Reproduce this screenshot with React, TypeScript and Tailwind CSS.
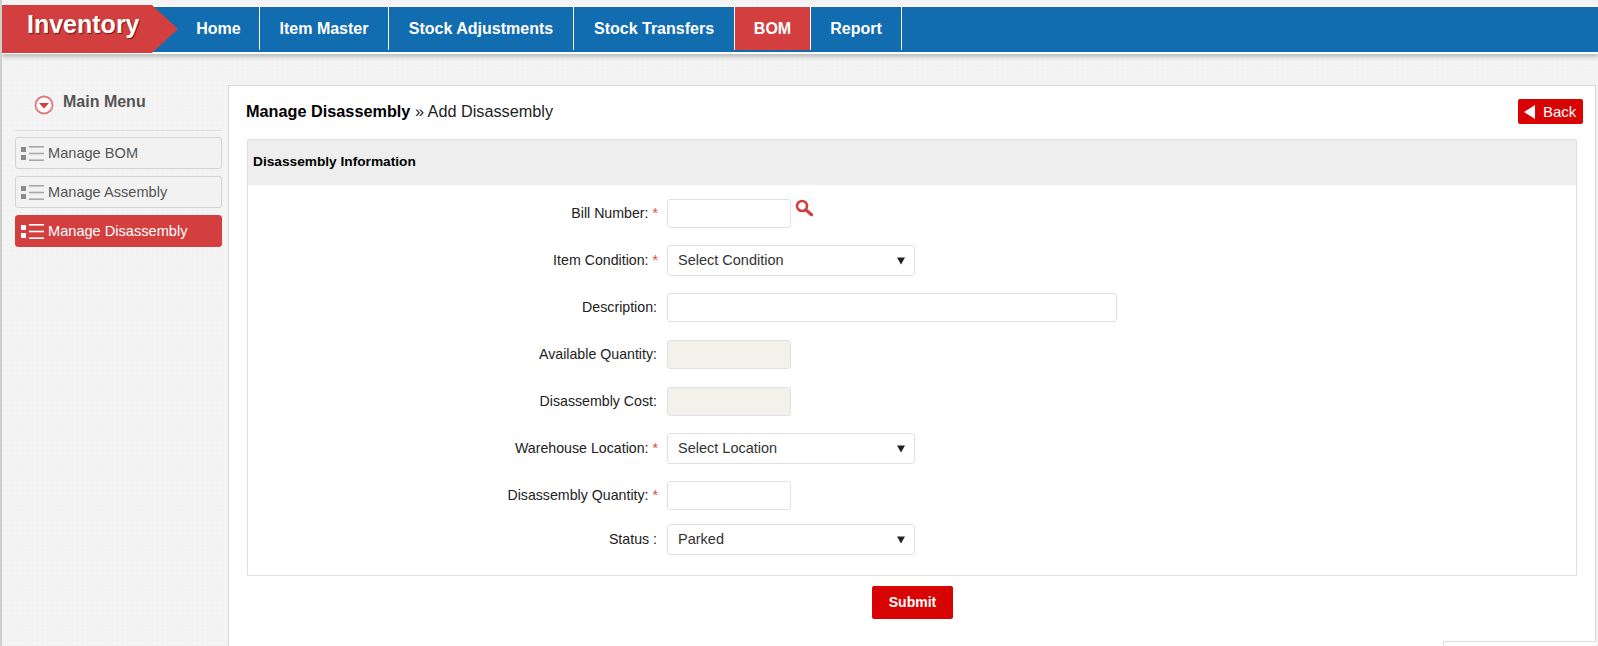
import type { ReactNode } from "react";

const navItems = [
  { label: "Home", width: "w-[82px]" },
  { label: "Item Master", width: "w-[129px]" },
  { label: "Stock Adjustments", width: "w-[185px]" },
  { label: "Stock Transfers", width: "w-[161px]" },
  { label: "BOM", width: "w-[76px]", active: true },
  { label: "Report", width: "w-[91px]" },
];

const menuItems = [
  { label: "Manage BOM" },
  { label: "Manage Assembly" },
  { label: "Manage Disassembly", active: true },
];

function ListIcon({ active }: { active?: boolean }) {
  const fill = active ? "#ffffff" : "#8a8a8a";
  const line = active ? "#ffffff" : "#a8a8a8";
  return (
    <svg width="23" height="17" viewBox="0 0 23 17" className="shrink-0">
      <rect x="0" y="2" width="5" height="5" fill={fill} />
      <rect x="0" y="10" width="5" height="5" fill={fill} />
      <rect x="8" y="1" width="15" height="1.6" fill={line} />
      <rect x="8" y="7.7" width="15" height="1.6" fill={line} />
      <rect x="8" y="14.4" width="15" height="1.6" fill={line} />
    </svg>
  );
}

function Row({
  label,
  required,
  className,
  children,
}: {
  label: string;
  required?: boolean;
  className: string;
  children: ReactNode;
}) {
  return (
    <div className={`flex items-center ${className}`}>
      <div
        className={`w-[412px] shrink-0 text-right text-[14.2px] text-[#222222] ${
          required ? "pr-[2px]" : "pr-[3px]"
        }`}
      >
        {label}
        {required && <span className="text-[#e04848]"> *</span>}
      </div>
      <div className="ml-[7px] flex items-start">{children}</div>
    </div>
  );
}

function TextBox({ wide, disabled }: { wide?: boolean; disabled?: boolean }) {
  return (
    <input
      type="text"
      disabled={disabled}
      className={`h-[29px] rounded-[3px] border border-[#dde1ea] ${
        wide ? "w-[450px]" : "w-[124px]"
      } ${disabled ? "bg-[#f2f2ea]" : "bg-white"}`}
    />
  );
}

function SelectBox({ text }: { text: string }) {
  return (
    <div className="flex h-[31px] w-[248px] items-center justify-between rounded-[3px] border border-[#dde1ea] bg-white pl-[10px] pr-[9px] text-[14.5px] text-[#333333]">
      <span>{text}</span>
      <svg width="8" height="8" viewBox="0 0 8 8">
        <path d="M0 0.5h8L4 7.5z" fill="#222222" />
      </svg>
    </div>
  );
}

export default function App() {
  return (
    <div className="relative h-[646px] w-[1598px] overflow-hidden border-l-2 border-[#cfcfcf] bg-[#f4f4f4] bg-[repeating-linear-gradient(0deg,rgba(0,0,0,0.008)_0_1px,transparent_1px_5px),repeating-linear-gradient(90deg,rgba(0,0,0,0.008)_0_1px,transparent_1px_5px)] font-['Liberation_Sans',Arial,sans-serif]">
      <header className="mt-[5px] flex h-[49px] bg-white shadow-[0_3px_4px_rgba(0,0,0,0.22)]">
        <div className="relative z-10 flex h-[48px] w-[150px] shrink-0 items-start bg-[#d33f3f] pl-[25px] pt-[6px] text-[25px] font-bold leading-[26px] text-white [text-shadow:1px_1px_1px_rgba(80,0,0,0.7)]">
          Inventory
          <span className="absolute left-full top-0 h-0 w-0 border-y-[24px] border-l-[26px] border-y-transparent border-l-[#d33f3f]" />
        </div>
        <nav className="mt-[2px] flex h-[45px] flex-1 items-stretch border-b-2 border-[#116cb0] bg-[#116cb0] pl-[26px]">
          {navItems.map((item) => (
            <div
              key={item.label}
              className={`flex items-center justify-center border-r border-white text-[16px] font-bold text-white ${item.width} ${
                item.active ? "bg-[#d33f3f]" : ""
              }`}
            >
              {item.label}
            </div>
          ))}
        </nav>
      </header>

      <div className="flex pt-[31px]">
        <aside className="w-[226px] shrink-0 pl-[13px] pr-[6px]">
          <div className="flex h-[46px] items-start border-b border-[#dddddd] pl-[19px] pt-[8px] shadow-[0_1px_0_#f8f8f8]">
            <svg width="20" height="20" viewBox="0 0 20 20" className="mt-[2px]">
              <circle cx="10" cy="10" r="8.5" fill="#fbfbfb" stroke="#e07a7a" strokeWidth="1.8" />
              <path d="M5 8h10l-5 5.5z" fill="#d33f3f" />
            </svg>
            <span className="ml-[9px] text-[16px] font-bold leading-[17px] text-[#555555]">
              Main Menu
            </span>
          </div>
          <ul className="mt-[6px] flex flex-col gap-[7px]">
            {menuItems.map((item) => (
              <li
                key={item.label}
                className={`flex h-[32px] items-center gap-[4px] rounded-[3px] border pl-[5px] text-[14.6px] ${
                  item.active
                    ? "border-[#d33f3f] bg-[#d33f3f] text-white"
                    : "border-[#d4d4d4] bg-[#f2f2f2] text-[#555555]"
                }`}
              >
                <ListIcon active={item.active} />
                <span className="pt-px">{item.label}</span>
              </li>
            ))}
          </ul>
        </aside>

        <main className="h-[600px] w-[1368px] shrink-0 border-l border-r border-t border-[#d8d8d8] bg-white pl-[17px] pr-[12px] pt-[13px]">
          <div className="flex h-[40px] items-start justify-between">
            <h1 className="pt-[2px] text-[16.25px] leading-[20px] text-[#222222]">
              <b className="text-black">Manage Disassembly</b> » Add Disassembly
            </h1>
            <button className="flex h-[25px] w-[65px] items-center rounded-[2px] bg-[#d80404] pl-[6px] text-[15px] text-white">
              <svg width="11" height="14" viewBox="0 0 11 14">
                <path d="M11 0v14L0 7z" fill="#ffffff" />
              </svg>
              <span className="ml-[8px] pt-px">Back</span>
            </button>
          </div>

          <section className="ml-px h-[437px] w-[1330px] rounded-[2px] border border-[#e0e0e0]">
            <div className="flex h-[45px] items-center bg-[#eeeeee] pl-[5px] text-[13.7px] font-bold text-black">
              Disassembly Information
            </div>
            <div className="pt-[14px]">
              <Row label="Bill Number:" required className="h-[29px]">
                <TextBox />
                <svg width="19" height="18" viewBox="0 0 19 18" className="ml-[4px]">
                  <circle cx="7" cy="7" r="5" fill="none" stroke="#d33f3f" strokeWidth="2.6" />
                  <path d="M10.8 10.8l5.7 5" stroke="#d33f3f" strokeWidth="3.2" strokeLinecap="round" />
                </svg>
              </Row>
              <Row label="Item Condition:" required className="mt-[17px] h-[31px]">
                <SelectBox text="Select Condition" />
              </Row>
              <Row label="Description:" className="mt-[17px] h-[29px]">
                <TextBox wide />
              </Row>
              <Row label="Available Quantity:" className="mt-[18px] h-[29px]">
                <TextBox disabled />
              </Row>
              <Row label="Disassembly Cost:" className="mt-[18px] h-[29px]">
                <TextBox disabled />
              </Row>
              <Row label="Warehouse Location:" required className="mt-[17px] h-[31px]">
                <SelectBox text="Select Location" />
              </Row>
              <Row label="Disassembly Quantity:" required className="mt-[17px] h-[29px]">
                <TextBox />
              </Row>
              <Row label="Status :" className="mt-[14px] h-[31px]">
                <SelectBox text="Parked" />
              </Row>
            </div>
          </section>

          <div className="mt-[10px] flex justify-center pr-[4px]">
            <button className="h-[33px] w-[81px] rounded-[2px] bg-[#d80404] text-[14px] font-bold text-white">
              Submit
            </button>
          </div>
        </main>
      </div>

      <div className="absolute left-[1441px] top-[641px] h-[10px] w-[153px] border-l border-t border-[#dddddd] bg-white" />
    </div>
  );
}
